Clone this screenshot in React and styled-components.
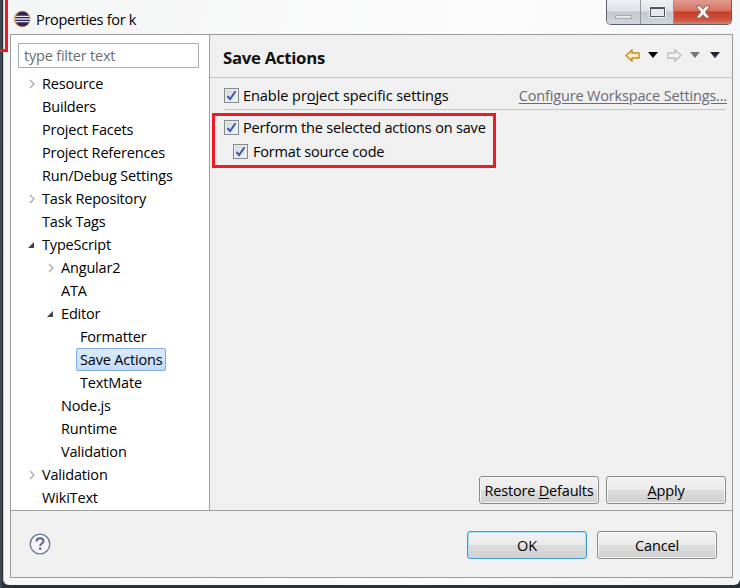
import React from 'react'
import styled, { createGlobalStyle } from 'styled-components'

const GlobalStyle = createGlobalStyle`
  html, body { margin: 0; padding: 0; background: #2b3034; }
  body { font-family: "Open Sans", "Liberation Sans", sans-serif; }
`

const Desktop = styled.div`
  position: relative;
  width: 740px;
  height: 588px;
  overflow: hidden;
  background: linear-gradient(90deg, #3d4a55 0, #3d4a55 2px, transparent 2px), #2b3034;
`

const Marker = styled.div`
  position: absolute;
  left: 0;
  top: 0;
  width: 8px;
  height: 52px;
  box-sizing: border-box;
  border-right: 3px solid #ed1c24;
  border-bottom: 3px solid #ed1c24;
  z-index: 2;
`

const Frame = styled.div`
  box-sizing: border-box;
  width: 737px;
  height: 585px;
  margin-left: 3px;
  padding: 0 7px 7px 7px;
  display: flex;
  flex-direction: column;
  border-radius: 0 0 6px 6px;
  background: linear-gradient(100deg, #f4f5f5 0, #fcfcfc 60%, #f2f3f4 100%);
  box-shadow: inset 1px 0 0 #c8ccd0;
`

const TitleBar = styled.div`
  height: 34px;
  flex: none;
  display: flex;
  align-items: flex-start;
  gap: 5px;
  padding-left: 3px;
  box-sizing: border-box;
`

const TitleText = styled.div`
  font-size: 14.5px;
  line-height: 19px;
  margin-top: 10px;
  color: #000;
  letter-spacing: -0.3px;
`

const LogoSlot = styled.div`
  margin-top: 10px;
  width: 18px;
  height: 18px;
  flex: none;
`

const Controls = styled.div`
  margin-left: auto;
  margin-right: 1px;
  width: 126px;
  height: 25px;
  display: flex;
  box-sizing: border-box;
  border: 1px solid #5c6269;
  border-top: none;
  border-radius: 0 0 5px 5px;
  overflow: hidden;
`

const WinButton = styled.div`
  width: ${p => p.$w}px;
  flex: none;
  display: flex;
  align-items: center;
  justify-content: center;
  box-sizing: border-box;
  border-right: ${p => (p.$close ? 'none' : '1px solid #8f949a')};
  background: ${p =>
    p.$close
      ? 'linear-gradient(180deg, #e09d90 0, #d8705e 45%, #c73d26 50%, #d0553f 85%, #c98a7c 100%)'
      : 'linear-gradient(180deg, #eef0f2 0, #dfe2e6 45%, #c4c9ce 50%, #d3d6da 100%)'};
`

const MinGlyph = styled.div`
  width: 17px;
  height: 4px;
  margin-top: 10px;
  box-sizing: border-box;
  border: 1px solid #a9adb2;
  background: #e6e7e9;
`

const MaxGlyph = styled.div`
  width: 15px;
  height: 10px;
  box-sizing: border-box;
  border: 1px solid #4b5563;
  border-top-width: 2px;
  background: #e6e8ea;
  box-shadow: 0 0 0 1px #f3f4f5;
`

const Dialog = styled.div`
  flex: 1;
  min-height: 0;
  display: flex;
  flex-direction: column;
  box-sizing: border-box;
  border: 1px solid #9b9b9b;
  background: #f0f0f0;
`

const Upper = styled.div`
  flex: 1;
  min-height: 0;
  display: flex;
  border-bottom: 1px solid #a0a0a0;
`

const Sidebar = styled.div`
  width: 199px;
  flex: none;
  box-sizing: border-box;
  background: #fff;
  border-right: 1px solid #a0a0a0;
  padding: 8px 0 0 7px;
`

const FilterInput = styled.div`
  width: 181px;
  height: 25px;
  box-sizing: border-box;
  border: 1px solid #abadb3;
  padding-left: 5px;
  font-size: 14.5px;
  line-height: 24px;
  letter-spacing: -0.2px;
  color: #6d6d6d;
  background: #fff;
`

const Tree = styled.div`
  margin-top: 4px;
`

const Row = styled.div`
  height: 23px;
  display: flex;
  align-items: center;
  padding-left: ${p => p.$indent}px;
  font-size: 14.5px;
  letter-spacing: -0.18px;
  color: #000;
`

const Twisty = styled.span`
  width: 19px;
  flex: none;
  display: flex;
  justify-content: flex-start;
  padding-left: 7px;
  box-sizing: border-box;
`

const Label = styled.span`
  box-sizing: border-box;
  line-height: 21px;
  height: 23px;
  padding: 0 3px 0 3px;
  margin-left: -3px;
  border: 1px solid ${p => (p.$selected ? '#84acdd' : 'transparent')};
  border-radius: 2px;
  background: ${p => (p.$selected ? 'linear-gradient(180deg, #dcebfc, #c2dcfd)' : 'transparent')};
`

const Main = styled.div`
  flex: 1;
  min-width: 0;
  display: flex;
  flex-direction: column;
`

const Header = styled.div`
  height: 43px;
  flex: none;
  display: flex;
  align-items: center;
  box-sizing: border-box;
  padding: 0 12px 0 13px;
  border-bottom: 1px solid #c4c4c4;
`

const Heading = styled.div`
  font-size: 16.8px;
  font-weight: 700;
  color: #111;
  letter-spacing: -0.3px;
  padding-top: 3px;
`

const NavIcons = styled.div`
  margin-left: auto;
  margin-top: -2px;
  display: flex;
  align-items: center;
`

const ProjectRow = styled.div`
  margin: 0 7px 0 14px;
  height: 32px;
  padding-top: 3px;
  box-sizing: border-box;
  display: flex;
  align-items: center;
  border-bottom: 1px solid #c4c4c4;
`

const CheckLine = styled.div`
  display: flex;
  align-items: center;
  gap: ${p => p.$gap || 4}px;
  height: 23px;
  font-size: 14.5px;
  letter-spacing: ${p => p.$tracking || '-0.18px'};
  color: #000;
  padding-left: ${p => p.$indent || 0}px;
`

const CheckBox = styled.span`
  width: 15px;
  height: 15px;
  flex: none;
  box-sizing: border-box;
  border: 1px solid #85888c;
  background: linear-gradient(135deg, #d3d6da, #f4f5f6);
  box-shadow: inset 0 0 0 1px #eceded;
  display: flex;
  align-items: center;
  justify-content: center;
`

const Underlined = styled.span`
  text-decoration: underline;
  text-underline-offset: 2px;
`

const ConfigLink = styled.span`
  margin-left: auto;
  margin-right: -2px;
  font-size: 14.5px;
  letter-spacing: -0.17px;
  color: #6a6a78;
  text-decoration: underline;
  text-underline-offset: 2px;
`

const Highlighted = styled.div`
  margin: 3px 0 0 2px;
  width: 284px;
  height: 55px;
  box-sizing: border-box;
  border: 3px solid #ed1c24;
  padding: 0 0 0 9px;
  display: flex;
  flex-direction: column;
  gap: 1px;
`

const Spacer = styled.div`
  flex: 1;
`

const PageButtons = styled.div`
  display: flex;
  justify-content: flex-end;
  gap: 7px;
  padding: 0 6px 6px 0;
`

const PushButton = styled.div`
  width: ${p => p.$w}px;
  height: 28px;
  box-sizing: border-box;
  display: flex;
  align-items: center;
  justify-content: center;
  font-size: 14.5px;
  letter-spacing: -0.18px;
  color: #000;
  border: 1px solid ${p => (p.$default ? '#3c9cd0' : '#8a8a8a')};
  border-radius: 3px;
  background: linear-gradient(180deg, #f2f2f2 0, #ebebeb 48%, #dddddd 52%, #cfcfcf 100%);
  box-shadow: inset 0 0 0 1px ${p => (p.$default ? '#a9e2f6' : '#f6f6f6')};
`

const Footer = styled.div`
  height: 66px;
  flex: none;
  display: flex;
  align-items: center;
  box-sizing: border-box;
  padding: 2px 15px 0 18px;
`

const HelpSlot = styled.div`
  display: flex;
  margin-bottom: 2px;
`

const FooterActions = styled.div`
  margin-left: auto;
  display: flex;
  gap: 10px;
`

const EclipseLogo = () => (
  <svg width="18" height="18" viewBox="0 0 18 18">
    <circle cx="9" cy="9" r="8.5" fill="#e8a04a" opacity="0.7" />
    <circle cx="9.5" cy="9" r="7.5" fill="#2c2255" />
    <path d="M2.5 6.4h14M2 9h15M2.5 11.6h14" stroke="#e9e8f0" strokeWidth="1.3" />
  </svg>
)

const CloseGlyph = () => (
  <svg width="18" height="14" viewBox="0 0 18 14">
    <path d="M2 1h4.2L9 4.2 11.8 1H16l-4.6 6 4.6 6h-4.2L9 9.8 6.2 13H2l4.6-6z" fill="#f5f3f2" stroke="#7a5a54" strokeWidth="0.8" />
  </svg>
)

const Chevron = () => (
  <svg width="7" height="10" viewBox="0 0 7 10">
    <path d="M1 1l4 4-4 4" fill="none" stroke="#a6a6a6" strokeWidth="1.2" />
  </svg>
)

const Expanded = () => (
  <svg width="8" height="8" viewBox="0 0 8 8" style={{ marginLeft: -2 }}>
    <path d="M7 1v6H1z" fill="#444" />
  </svg>
)

const Tick = () => (
  <svg width="11" height="11" viewBox="0 0 11 11">
    <path d="M1.5 6l2.6 3L9.5 1.2" fill="none" stroke="#3d5ca8" strokeWidth="2" />
  </svg>
)

const BackArrow = () => (
  <svg width="15" height="13" viewBox="0 0 15 13" style={{ marginRight: 8 }}>
    <path d="M1 6.5l6-5.5v3h7v5H7v3z" fill="#fdf0c4" stroke="#c98a1e" strokeWidth="1.4" />
  </svg>
)

const ForwardArrow = () => (
  <svg width="15" height="13" viewBox="0 0 15 13" style={{ marginLeft: 9, marginRight: 8 }}>
    <path d="M14 6.5L8 1v3H1v5h7v3z" fill="#f4f4f4" stroke="#bdbdbd" strokeWidth="1.4" />
  </svg>
)

const Drop = ({ color, accent, gap }) => (
  <svg width="10" height="6" viewBox="0 0 10 6" style={{ marginLeft: gap || 0 }}>
    <path d="M0 0h10L5 6z" fill={color} />
    {accent && <path d="M3 3.5h4L5 6z" fill={accent} />}
  </svg>
)

const HelpIcon = () => (
  <svg width="22" height="22" viewBox="0 0 22 22">
    <circle cx="11" cy="11" r="9.8" fill="#f3f4f7" stroke="#67738f" strokeWidth="1.3" />
    <path d="M7.6 8.4c0-2 1.6-3.2 3.5-3.2s3.4 1.1 3.4 2.9c0 2.4-3.3 2.4-3.3 4.8" fill="none" stroke="#5b6680" strokeWidth="2" />
    <rect x="10.1" y="14.5" width="2.2" height="2.3" fill="#5b6680" />
  </svg>
)

const treeRows = [
  { label: 'Resource', level: 0, icon: 'closed' },
  { label: 'Builders', level: 0 },
  { label: 'Project Facets', level: 0 },
  { label: 'Project References', level: 0 },
  { label: 'Run/Debug Settings', level: 0 },
  { label: 'Task Repository', level: 0, icon: 'closed' },
  { label: 'Task Tags', level: 0 },
  { label: 'TypeScript', level: 0, icon: 'open' },
  { label: 'Angular2', level: 1, icon: 'closed' },
  { label: 'ATA', level: 1 },
  { label: 'Editor', level: 1, icon: 'open' },
  { label: 'Formatter', level: 2 },
  { label: 'Save Actions', level: 2, selected: true },
  { label: 'TextMate', level: 2 },
  { label: 'Node.js', level: 1 },
  { label: 'Runtime', level: 1 },
  { label: 'Validation', level: 1 },
  { label: 'Validation', level: 0, icon: 'closed' },
  { label: 'WikiText', level: 0 },
]

export default function App() {
  return (
    <Desktop>
      <GlobalStyle />
      <Marker />
      <Frame>
        <TitleBar>
          <LogoSlot><EclipseLogo /></LogoSlot>
          <TitleText>Properties for k</TitleText>
          <Controls>
            <WinButton $w={34}><MinGlyph /></WinButton>
            <WinButton $w={33}><MaxGlyph /></WinButton>
            <WinButton $w={58} $close><CloseGlyph /></WinButton>
          </Controls>
        </TitleBar>
        <Dialog>
          <Upper>
            <Sidebar>
              <FilterInput>type filter text</FilterInput>
              <Tree>
                {treeRows.map((row, i) => (
                  <Row key={i} $indent={4 + row.level * 19}>
                    <Twisty>
                      {row.icon === 'closed' && <Chevron />}
                      {row.icon === 'open' && <Expanded />}
                    </Twisty>
                    <Label $selected={row.selected}>{row.label}</Label>
                  </Row>
                ))}
              </Tree>
            </Sidebar>
            <Main>
              <Header>
                <Heading>Save Actions</Heading>
                <NavIcons>
                  <BackArrow />
                  <Drop color="#000" />
                  <ForwardArrow />
                  <Drop color="#777" />
                  <Drop color="#222" accent="#5a2d9c" gap={10} />
                </NavIcons>
              </Header>
              <ProjectRow>
                <CheckLine $tracking="-0.05px">
                  <CheckBox><Tick /></CheckBox>
                  <span>Enable pr<Underlined>o</Underlined>ject specific settings</span>
                </CheckLine>
                <ConfigLink>Configure Workspace Settings...</ConfigLink>
              </ProjectRow>
              <Highlighted>
                <CheckLine>
                  <CheckBox><Tick /></CheckBox>
                  <span>Perform the selected actions on save</span>
                </CheckLine>
                <CheckLine $indent={9} $gap={5}>
                  <CheckBox><Tick /></CheckBox>
                  <span>Format source code</span>
                </CheckLine>
              </Highlighted>
              <Spacer />
              <PageButtons>
                <PushButton $w={120}><span>Restore <Underlined>D</Underlined>efaults</span></PushButton>
                <PushButton $w={120}><span><Underlined>A</Underlined>pply</span></PushButton>
              </PageButtons>
            </Main>
          </Upper>
          <Footer>
            <HelpSlot><HelpIcon /></HelpSlot>
            <FooterActions>
              <PushButton $w={120} $default>OK</PushButton>
              <PushButton $w={120}>Cancel</PushButton>
            </FooterActions>
          </Footer>
        </Dialog>
      </Frame>
    </Desktop>
  )
}
